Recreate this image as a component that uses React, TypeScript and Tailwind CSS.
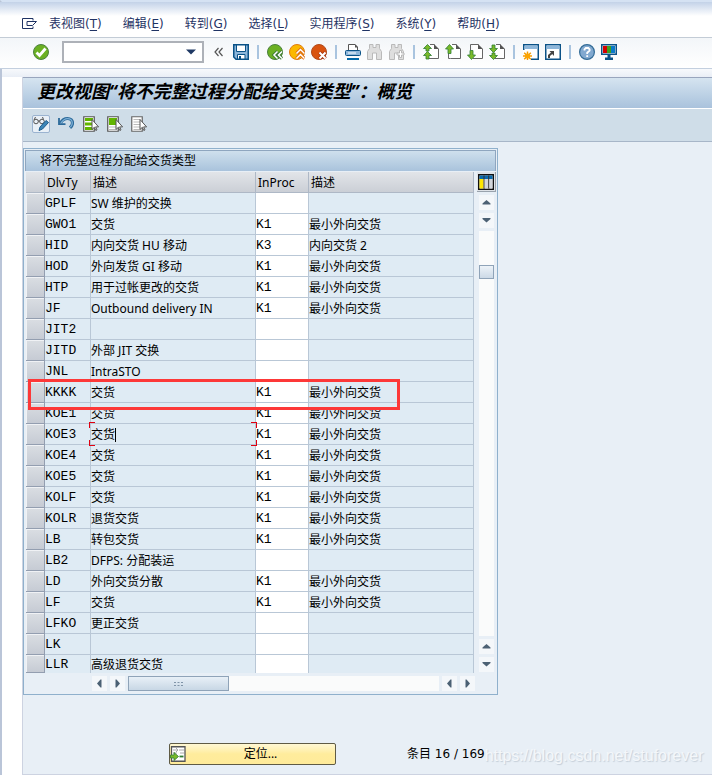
import type { ReactNode } from "react";

const menus = [
    { label: "表视图", key: "T" },
    { label: "编辑", key: "E" },
    { label: "转到", key: "G" },
    { label: "选择", key: "L" },
    { label: "实用程序", key: "S" },
    { label: "系统", key: "Y" },
    { label: "帮助", key: "H" },
];

type Row = { type: string; desc: string; proc: string; procDesc: string };

const MIN = "最小外向交货";

const rows: Row[] = [
    { type: "GPLF", desc: "SW 维护的交换", proc: "", procDesc: "" },
    { type: "GWO1", desc: "交货", proc: "K1", procDesc: MIN },
    { type: "HID", desc: "内向交货 HU 移动", proc: "K3", procDesc: "内向交货 2" },
    { type: "HOD", desc: "外向发货 GI 移动", proc: "K1", procDesc: MIN },
    { type: "HTP", desc: "用于过帐更改的交货", proc: "K1", procDesc: MIN },
    { type: "JF", desc: "Outbound delivery IN", proc: "K1", procDesc: MIN },
    { type: "JIT2", desc: "", proc: "", procDesc: "" },
    { type: "JITD", desc: "外部 JIT 交换", proc: "", procDesc: "" },
    { type: "JNL", desc: "IntraSTO", proc: "", procDesc: "" },
    { type: "KKKK", desc: "交货", proc: "K1", procDesc: MIN },
    { type: "KOE1", desc: "交货", proc: "K1", procDesc: MIN },
    { type: "KOE3", desc: "交货", proc: "K1", procDesc: MIN },
    { type: "KOE4", desc: "交货", proc: "K1", procDesc: MIN },
    { type: "KOE5", desc: "交货", proc: "K1", procDesc: MIN },
    { type: "KOLF", desc: "交货", proc: "K1", procDesc: MIN },
    { type: "KOLR", desc: "退货交货", proc: "K1", procDesc: MIN },
    { type: "LB", desc: "转包交货", proc: "K1", procDesc: MIN },
    { type: "LB2", desc: "DFPS: 分配装运", proc: "", procDesc: "" },
    { type: "LD", desc: "外向交货分散", proc: "K1", procDesc: MIN },
    { type: "LF", desc: "交货", proc: "K1", procDesc: MIN },
    { type: "LFKO", desc: "更正交货", proc: "", procDesc: "" },
    { type: "LK", desc: "", proc: "", procDesc: "" },
    { type: "LLR", desc: "高级退货交货", proc: "", procDesc: "" },
];

const HIGHLIGHTED = "KKKK";
const FOCUSED = "KOE3";

function Icon({ children }: { children: ReactNode }) {
    return (
        <svg viewBox="0 0 16 16" className="block size-4 shrink-0" fill="none" aria-hidden="true">
            {children}
        </svg>
    );
}

function ToolButton({ label, children }: { label: string; children: ReactNode }) {
    return (
        <button type="button" aria-label={label} className="size-4 shrink-0">
            <Icon>{children}</Icon>
        </button>
    );
}

function Separator() {
    return (
        <span className="flex w-1.5 shrink-0 justify-center">
            <span className="h-3.5 w-0.5 bg-[#a9c4df]" />
        </span>
    );
}

/* sheet with a folded corner, shared by the four paging icons */
function Page({ children }: { children: ReactNode }) {
    return (
        <>
            <path d="M6 .5h5.500l4 4v10H5.500" fill="#fff" />
            <path d="M7 .5h4.500M15.500 5v9.500H6" stroke="#666" />
            <path d="M11 0v5h5z" fill="#555" />
            <g fill="#7ab929" stroke="#2f7d32" strokeWidth=".8">{children}</g>
        </>
    );
}

function Binoculars() {
    return (
        <path
            d="M2.500.5h3.500v3h3v-3h3.500v4l2 3v8H9.500V9h-4v6.500h-5v-8l2-3z"
            fill="#dedede"
            stroke="#bababa"
        />
    );
}

const cursor = <path d="M9 3.500v10l2.300-2.200 1.500 3.200 1.200-.6-1.400-3h3z" fill="#fff" stroke="#555" />;

function MenuBar() {
    return (
        <nav className="flex h-9 items-center gap-[21px] border-b border-[#c3ccd6] bg-gradient-to-b from-[#c3d2e8] to-white to-40% pl-[22px] pt-2 font-['DejaVu_Sans','Noto_Sans_CJK_SC',sans-serif] text-[#1f3364]">
            <button type="button" aria-label="系统菜单" className="-mr-2.5 shrink-0">
                <svg viewBox="0 0 16 12" className="block h-3 w-4" fill="none" stroke="#1f3364" aria-hidden="true">
                    <path d="M11 2.500v-2H.5v10H11v-2" />
                    <path d="M5 3.500h9.500l-4 4H5z" />
                </svg>
            </button>
            {menus.map((m) => (
                <button key={m.key} type="button" className="whitespace-nowrap">
                    {m.label}(<span className="underline underline-offset-2">{m.key}</span>)
                </button>
            ))}
        </nav>
    );
}

function SystemToolbar() {
    return (
        <div className="flex h-[31px] items-center gap-1.5 border-b border-[#c3cfdf] bg-gradient-to-b from-[#f3f6f9] to-white pl-[33px] pb-0.5">
            <ToolButton label="回车">
                <circle cx="8" cy="8" r="7.500" fill="#6bb022" stroke="#4c8040" />
                <path d="M3.500 8.500l3 3 6-7" stroke="#fff" strokeWidth="2.800" />
            </ToolButton>
            <div className="ml-[7px] flex h-[22px] w-[142px] shrink-0 items-center border-2 border-[#adb1b8] bg-white">
                <input type="text" aria-label="命令" className="h-full min-w-0 flex-1 px-1 outline-none" />
                <button type="button" aria-label="命令历史" className="mr-1 flex h-full w-3 items-center">
                    <svg viewBox="0 0 10 6" className="h-1.5 w-2.5" aria-hidden="true">
                        <path d="M0 .5h10L5 5.500z" fill="#1f3864" />
                    </svg>
                </button>
            </div>
            <button type="button" aria-label="隐藏命令栏" className="mx-1 shrink-0">
                <svg viewBox="0 0 9 10" className="block h-2.5 w-[9px]" fill="none" stroke="#555" strokeWidth="1.200" aria-hidden="true">
                    <path d="M4.500 1L1 5l3.500 4M8.500 1L5 5l3.500 4" />
                </svg>
            </button>
            <ToolButton label="保存">
                <path d="M.75.75h14.500v14.500H3L.75 13z" fill="#8db6da" stroke="#0b5287" strokeWidth="1.500" />
                <path d="M3.500 1h9v6.500h-9z" fill="#fff" stroke="#0b5287" />
                <path d="M4.500 10.500h7.500V15H4.500z" fill="#fff" stroke="#0b5287" />
                <path d="M6 12h2v3H6z" fill="#0b5287" />
            </ToolButton>
            <Separator />
            <ToolButton label="返回">
                <circle cx="8" cy="8" r="7.500" fill="#6bb022" stroke="#4c8040" />
                <path d="M10.500 7.500l-3.500 3.500 3.500 3.500M15 7.500L11.500 11l3.500 3.500" stroke="#3d7a34" strokeWidth="3.200" />
                <path d="M10.500 7.500l-3.500 3.500 3.500 3.500M15 7.500L11.500 11l3.500 3.500" stroke="#fff" strokeWidth="1.500" />
            </ToolButton>
            <ToolButton label="退出">
                <circle cx="8" cy="8" r="7.500" fill="#fbb800" stroke="#e07b10" />
                <path d="M7.500 9.500L11.500 5.500l4 4M7.500 14.500l4-4 4 4" stroke="#dd6b10" strokeWidth="3.200" />
                <path d="M7.500 9.500L11.500 5.500l4 4M7.500 14.500l4-4 4 4" stroke="#fff" strokeWidth="1.500" />
            </ToolButton>
            <ToolButton label="取消">
                <circle cx="8" cy="8" r="7.500" fill="#d9530f" stroke="#b04a1c" />
                <path d="M8.500 8.500l6 6m0-6l-6 6" stroke="#a4320c" strokeWidth="3.600" />
                <path d="M8.500 8.500l6 6m0-6l-6 6" stroke="#fff" strokeWidth="2" />
            </ToolButton>
            <Separator />
            <ToolButton label="打印">
                <path d="M3.500 6V.5H10L12.500 3v3" fill="#fff" stroke="#555" />
                <path d="M10 0v3.500h3z" fill="#555" />
                <rect x=".5" y="6.500" width="15" height="5" rx="1" fill="#8db6da" stroke="#0b5287" />
                <path d="M3 9h8" stroke="#fff" />
                <path d="M2 14h12v2H2z" fill="#0067a8" />
            </ToolButton>
            <ToolButton label="查找"><Binoculars /></ToolButton>
            <ToolButton label="继续查找">
                <Binoculars />
                <path d="M10.500 6.500h2v2.500H15v2h-2.500v2.500h-2V11H8V9h2.500z" fill="#fff" stroke="#b8b8b8" />
            </ToolButton>
            <Separator />
            <ToolButton label="第一页">
                <Page><path d="M4.500.5l4 4H6v2.500H3V4.500H.5zM4.500 7.500l4 4H6V15H3v-3.500H.5z" /></Page>
            </ToolButton>
            <ToolButton label="上一页">
                <path d="M3.500 9v5.500H7" stroke="#666" />
                <Page><path d="M4.500.5l4 4.500H6v4.500H3V5H.5z" /></Page>
            </ToolButton>
            <ToolButton label="下一页">
                <Page><path d="M4.500 15.500l4-4.500H6V6.500H3V11H.5z" /></Page>
                <path d="M3.500 6V.5H7" stroke="#666" />
            </ToolButton>
            <ToolButton label="最后一页">
                <Page><path d="M4.500 8.500l4-4H6V1H3v3.500H.5zM4.500 15.500l4-4H6V9H3v2.500H.5z" /></Page>
            </ToolButton>
            <Separator />
            <ToolButton label="新会话">
                <path d="M.75.75h14.500v14.500H.75z" fill="#fff" stroke="#0b5287" strokeWidth="1.500" />
                <path d="M1.500 1.500h13V5h-13z" fill="#8db6da" />
                <path d="M0 6h8v10H0z" fill="#fff" />
                <path d="M4.500 7.500v9M0 12h9M1.200 8.700l6.600 6.600M7.800 8.700l-6.600 6.600" stroke="#f59b00" strokeWidth="1.500" />
                <circle cx="4.500" cy="12" r="2.500" fill="#fba400" />
            </ToolButton>
            <ToolButton label="生成快捷方式">
                <path d="M.75.75h14.500v14.500H.75z" fill="#fff" stroke="#0b5287" strokeWidth="1.500" />
                <path d="M1.500 1.500h13V5h-13z" fill="#8db6da" />
                <path d="M4 14v-2.500L7 9" stroke="#444" strokeWidth="2" />
                <path d="M4.500 7H9v5z" fill="#444" />
            </ToolButton>
            <Separator />
            <ToolButton label="帮助">
                <circle cx="8" cy="8" r="7.400" fill="#82a9d0" stroke="#336c97" strokeWidth="1.200" />
                <path d="M5.500 6.500V5.300L6.800 4h2.500l1.300 1.300v1.400L8.200 8.700V10M8.200 11.200v1.800" stroke="#fff" strokeWidth="1.800" />
            </ToolButton>
            <ToolButton label="布局">
                <path d="M.75.75h14.500v9.500H.75z" fill="#fff" stroke="#0b5287" strokeWidth="1.500" />
                <path d="M2 2h4v7H2z" fill="#d40000" />
                <path d="M6 2h4v7H6z" fill="#3fa01e" />
                <path d="M10 2h4v7h-4z" fill="#0878c9" />
                <path d="M6.500 11h3v2.500H12V16H4v-2.500h2.500z" fill="#0b5287" />
            </ToolButton>
        </div>
    );
}

function ViewToolbar() {
    return (
        <div className="flex h-[33px] items-center gap-2 border-b border-[#a7b6c8] bg-[#cfdde8] pb-0.5 pl-[9px]">
            <button type="button" aria-label="显示/更改" className="flex size-[18px] items-center justify-center rounded-xs border border-[#9bb3d0] bg-[#e9f0f7]">
                <Icon>
                    <circle cx="3" cy="5.500" r="2.300" stroke="#555" />
                    <circle cx="9" cy="5.500" r="2.300" stroke="#555" />
                    <path d="M1 4l1.500-3M5 5h2M10.500 3.500L9.500 1" stroke="#555" />
                    <path d="M6 14.500l1-3.500 6-6.500 2.500 2L9.500 13z" fill="#3d86b8" stroke="#1d5c8c" />
                </Icon>
            </button>
            <button type="button" aria-label="撤消" className="mr-px size-4">
                <Icon>
                    <path d="M2.500 7C4.500 3.500 7 2.500 9.500 2.500c3 0 5 1.800 5 4.500 0 2-1 3.500-2.500 4.800" stroke="#2c6a9a" strokeWidth="3.200" />
                    <path d="M1 2v6.200h6.500" stroke="#2c6a9a" strokeWidth="1.800" />
                    <path d="M3 7C5 3.800 7 2.600 9.500 2.600c2.800 0 4.800 1.700 4.800 4.400 0 1.700-.8 3-1.900 4.200" stroke="#7eb1d8" strokeWidth="1.300" />
                </Icon>
            </button>
            <button type="button" aria-label="全选" className="size-4">
                <Icon>
                    <path d="M.75.75h10.500v14.500H.75z" fill="#fff" stroke="#555" strokeWidth="1.200" />
                    <path d="M2 2h8v3H2zM2 6.500h8v3H2zM2 11h8v3H2z" fill="#62b500" />
                    {cursor}
                </Icon>
            </button>
            <button type="button" aria-label="选择块" className="size-4">
                <Icon>
                    <path d="M.75.75h10.500v14.500H.75z" fill="#fff" stroke="#555" strokeWidth="1.200" />
                    <path d="M2 2h8v7H2z" fill="#62b500" />
                    <path d="M2 11h7M2 13.500h7" stroke="#bbb" />
                    {cursor}
                </Icon>
            </button>
            <button type="button" aria-label="取消全选" className="size-4">
                <Icon>
                    <path d="M.75.75h10.500v14.500H.75z" fill="#fff" stroke="#666" strokeWidth="1.200" />
                    <path d="M2.500 3.500h7M2.500 6h7M2.500 8.500h7M2.500 11h7M2.500 13.500h7" stroke="#bbb" />
                    {cursor}
                </Icon>
            </button>
        </div>
    );
}

const arrows = {
    up: "M3.500 9.500v-1l4-3.500 4 3.500v1z",
    down: "M3.500 5v1l4 3.500 4-3.500V5z",
    left: "M9.500 3.500h-1L5 7.500l3.500 4h1z",
    right: "M5.500 3.500h1l3.500 4-3.500 4h-1z",
};

function ScrollButton({ dir, label }: { dir: keyof typeof arrows; label: string }) {
    return (
        <button type="button" aria-label={label} className="flex size-[15px] shrink-0 items-center justify-center bg-[#f4f7fa]">
            <svg viewBox="0 0 15 15" className="size-[15px]" aria-hidden="true">
                <path d={arrows[dir]} fill="#4c6174" />
            </svg>
        </button>
    );
}

function FocusCorners() {
    return (
        <>
            <span className="absolute -top-0.5 -left-0.5 z-10 size-1.5 border-0 border-t border-l border-[#e00010]" />
            <span className="absolute -bottom-0.5 -left-0.5 z-10 size-1.5 border-0 border-b border-l border-[#e00010]" />
            <span className="absolute -top-0.5 -right-0.5 z-10 size-1.5 border-0 border-t border-r border-[#e00010]" />
            <span className="absolute -right-0.5 -bottom-0.5 z-10 size-1.5 border-0 border-r border-b border-[#e00010]" />
        </>
    );
}

function DataRow({ row, last }: { row: Row; last: boolean }) {
    const focused = row.type === FOCUSED;
    const cell = last
        ? "h-[18px] border-r border-[#b9c7d6] p-0 pt-0.5 leading-4"
        : "h-[21px] border-r border-b border-[#b9c7d6] p-0 pt-0.5 leading-[18px]";
    return (
        <tr>
            <td className="relative border-r border-b border-[#939eb0] bg-[#c9ced6] p-0">
                <button
                    type="button"
                    aria-label={`选择 ${row.type}`}
                    className={
                        last
                            ? "block h-[17px] w-full border-t border-l border-[#f0f2f5] bg-gradient-to-b from-[#d9dde2] to-[#c6cbd4]"
                            : "block h-5 w-full border-t border-l border-[#f0f2f5] bg-gradient-to-b from-[#d9dde2] to-[#c6cbd4]"
                    }
                />
                {row.type === HIGHLIGHTED && (
                    <span className="pointer-events-none absolute -top-[3px] left-0.5 z-10 h-[31px] w-[372px] border-3 border-[#fd3838]" />
                )}
            </td>
            <td className={`${cell} bg-[#dfebf4] font-['Liberation_Mono',monospace] text-[13px]`}>{row.type}</td>
            <td className={`${cell} relative bg-[#dfebf4]`}>
                {row.desc}
                {focused && (
                    <>
                        <span className="absolute top-1 h-3.5 w-px bg-black" />
                        <FocusCorners />
                    </>
                )}
            </td>
            <td className={`${cell} bg-white font-['Liberation_Mono',monospace] text-[13px]`}>
                <input
                    type="text"
                    aria-label={`${row.type} InProc`}
                    defaultValue={row.proc}
                    className={last ? "block h-4 w-full" : "block h-[18px] w-full"}
                />
            </td>
            <td className={`${cell} bg-[#dfebf4]`}>{row.procDesc}</td>
        </tr>
    );
}

function DeliveryTable() {
    const head = "h-[21px] border-r border-b border-[#aeb8c6] bg-gradient-to-b from-[#e2e5e9] to-[#cbcfd6] p-0 pt-0.5 pl-0.5 text-left font-normal leading-[18px]";
    return (
        <table className="w-[448px] table-fixed border-separate border-spacing-0">
            <colgroup>
                <col className="w-[19px]" />
                <col className="w-[46px]" />
                <col className="w-[165px]" />
                <col className="w-[53px]" />
                <col className="w-[165px]" />
            </colgroup>
            <thead>
                <tr>
                    <th className={head} aria-label="选择" />
                    <th className={head}>DlvTy</th>
                    <th className={head}>描述</th>
                    <th className={head}>InProc</th>
                    <th className={head}>描述</th>
                </tr>
            </thead>
            <tbody>
                {rows.map((row, i) => (
                    <DataRow key={row.type} row={row} last={i === rows.length - 1} />
                ))}
            </tbody>
        </table>
    );
}

function VerticalScroll() {
    return (
        <div className="flex w-[19px] flex-col items-center gap-[3px] pb-px">
            <button type="button" aria-label="配置" className="flex h-5 w-[19px] shrink-0 items-center justify-center border-r border-b border-[#9aa3ad] bg-[#dfe3e8]">
                <Icon>
                    <path d="M.75.75h14.500v14.500H.75z" fill="#f0f2f5" stroke="#111" strokeWidth="1.500" />
                    <path d="M1.500 1.500h13V5h-13z" fill="#0a69ad" />
                    <path d="M1.500 5h4v9.500h-4z" fill="#ffe800" />
                    <path d="M7 5h3.500v9.500H7zM11.500 5h3v9.500h-3z" fill="#d3d6db" />
                    <path d="M6 1.500v13M10.700 1.500v13" stroke="#333" />
                </Icon>
            </button>
            <ScrollButton dir="up" label="向上滚动" />
            <ScrollButton dir="down" label="向下滚动" />
            <div className="w-[15px] flex-1 bg-[#fafbfb] pt-[34px]">
                <div className="h-3.5 border border-[#8fa3b8] bg-gradient-to-b from-[#edf3f8] to-[#ccd9e6]" />
            </div>
            <ScrollButton dir="up" label="上一行" />
            <ScrollButton dir="down" label="下一行" />
        </div>
    );
}

function HorizontalScroll() {
    return (
        <div className="mt-[3px] mb-0.5 flex items-center gap-[3px] pr-[21px] pl-[67px]">
            <ScrollButton dir="left" label="向左滚动" />
            <ScrollButton dir="right" label="向右滚动" />
            <div className="flex-1 bg-[#fafbfb]">
                <div className="flex h-[15px] w-[101px] items-center justify-center border border-[#8fa3b8] bg-gradient-to-b from-[#e8f0f7] to-[#c8d7e5]">
                    <svg viewBox="0 0 9 6" className="h-1.5 w-[9px]" aria-hidden="true">
                        <path d="M0 1h2v1H0zM3.500 1h2v1h-2zM7 1h2v1H7zM0 4h2v1H0zM3.500 4h2v1h-2zM7 4h2v1H7z" fill="#8094a8" />
                    </svg>
                </div>
            </div>
            <ScrollButton dir="left" label="上一列" />
            <ScrollButton dir="right" label="下一列" />
        </div>
    );
}

export default function App() {
    return (
        <div className="flex min-h-screen flex-col border-l-2 border-[#bac5d8] bg-white font-['Noto_Sans','Noto_Sans_CJK_SC',sans-serif] text-xs text-black">
            <div className="-ml-0.5 border-l-2 border-[#bac5d8] border-t-2 border-t-[#d5e2f3]">
                <div className="-ml-0.5">
                    <MenuBar />
                    <SystemToolbar />
                </div>
            </div>
            <div className="h-2 bg-gradient-to-b from-[#f7f9fc] to-[#e9eef6]" />
            <main className="ml-5 flex flex-1 flex-col border-b border-l border-[#cdd3e1] bg-[#e8eff6]">
                <h1 className="flex h-8 items-center border-t border-b border-t-[#98a5bd] border-b-white bg-gradient-to-b from-[#d5e4f0] to-[#a9c2dc] pb-1 pl-3.5 text-lg font-bold italic whitespace-nowrap">
                    更改视图“将不完整过程分配给交货类型”：概览
                </h1>
                <ViewToolbar />
                <section className="mt-1.5 w-fit border border-[#8fb0cc] p-px">
                    <h2 className="mb-px flex h-[21px] items-center border-x border-t border-[#8fa6bf] bg-gradient-to-b from-[#cfe0ed] to-[#a9c3dc] pl-3.5">
                        将不完整过程分配给交货类型
                    </h2>
                    <div className="flex gap-[3px] pl-px">
                        <DeliveryTable />
                        <VerticalScroll />
                    </div>
                    <HorizontalScroll />
                </section>
                <footer className="mt-12 mb-2 flex items-center pl-[146px] whitespace-nowrap">
                    <button type="button" className="flex h-[22px] w-[167px] shrink-0 items-center rounded-xs border border-[#5f5b45] bg-gradient-to-b from-[#fff8d4] via-[#ffec9c] to-[#ffeb9a]">
                        <Icon>
                            <path d="M1.500.75h13.500v14.500H1.500z" fill="#fff" stroke="#555" strokeWidth="1.300" />
                            <path d="M3 4h5M6 2l2 2-2 2M9 4h5M3 7h4M10 7h4" stroke="#aaa" />
                            <path d="M9.500 10.500h4" stroke="#2f7d32" strokeWidth="1.800" />
                            <path d="M.5 9H4V6.500l4.500 4-4.500 4V12H.5z" fill="#7ab929" stroke="#2f7d32" strokeWidth=".8" />
                        </Icon>
                        <span className="flex-1 text-center">定位...</span>
                    </button>
                    <span className="ml-[71px] font-['DejaVu_Sans','Noto_Sans_CJK_SC',sans-serif]">条目 16 / 169</span>
                    <span className="pt-1 font-['Liberation_Sans',sans-serif] text-base leading-4 text-[#f4f7fa] [text-shadow:1px_1px_1px_#c4ced8]">
                        https://blog.csdn.net/stuforever
                    </span>
                </footer>
            </main>
        </div>
    );
}
